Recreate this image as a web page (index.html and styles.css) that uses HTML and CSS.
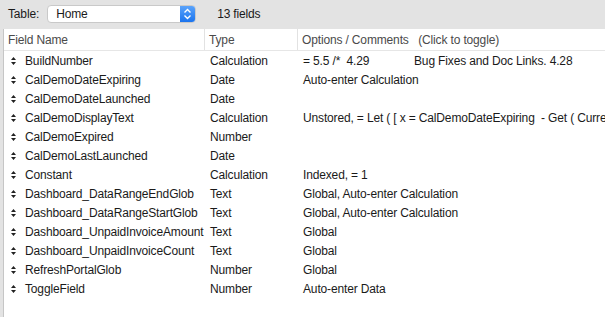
FILE: index.html
```html
<!DOCTYPE html>
<html lang="en">
<head>
  <meta charset="UTF-8">
  <title>Fields</title>
  <link rel="stylesheet" href="styles.css">
</head>
<body>
  <div class="toolbar">
    <span class="tlabel">Table:</span>
    <div class="popup">
      <span class="popup-text">Home</span>
      <span class="stepper">
        <svg width="9" height="12" viewBox="0 0 9 12"><path d="M1.5 4.5 L4.5 1.5 L7.5 4.5 M1.5 7.5 L4.5 10.5 L7.5 7.5" fill="none" stroke="#fff" stroke-width="1.4"/></svg>
      </span>
    </div>
    <span class="count">13 fields</span>
  </div>

  <div class="table">
    <div class="head">
      <div class="hcell">Field Name</div>
      <div class="hcell">Type</div>
      <div class="hcell">Options / Comments &nbsp; (Click to toggle)</div>
    </div>
    <div class="rows" id="rows"></div>
  </div>

  <script>
    const fields = [
      ['BuildNumber', 'Calculation', '= 5.5 /*  4.29', 'Bug Fixes and Doc Links. 4.28'],
      ['CalDemoDateExpiring', 'Date', 'Auto-enter Calculation'],
      ['CalDemoDateLaunched', 'Date', ''],
      ['CalDemoDisplayText', 'Calculation', 'Unstored, = Let ( [ x = CalDemoDateExpiring  - Get ( CurrentDate ) ; y = x ]'],
      ['CalDemoExpired', 'Number', ''],
      ['CalDemoLastLaunched', 'Date', ''],
      ['Constant', 'Calculation', 'Indexed, = 1'],
      ['Dashboard_DataRangeEndGlob', 'Text', 'Global, Auto-enter Calculation'],
      ['Dashboard_DataRangeStartGlob', 'Text', 'Global, Auto-enter Calculation'],
      ['Dashboard_UnpaidInvoiceAmount', 'Text', 'Global'],
      ['Dashboard_UnpaidInvoiceCount', 'Text', 'Global'],
      ['RefreshPortalGlob', 'Number', 'Global'],
      ['ToggleField', 'Number', 'Auto-enter Data']
    ];
    const handle = '<svg class="grip" width="5" height="8" viewBox="0 0 5 8"><path d="M2.5 0 L5 3 L0 3 Z M0 5 L5 5 L2.5 8 Z" fill="#222"/></svg>';
    const rows = document.getElementById('rows');
    fields.forEach(function(f){
      const row = document.createElement('div');
      row.className = 'row';
      let opts = '<span>' + f[2] + '</span>';
      if(f[3]) opts = '<span class="opt1">' + f[2] + '</span><span>' + f[3] + '</span>';
      row.innerHTML = '<div class="cell name">' + handle + '<span>' + f[0] + '</span></div>' +
        '<div class="cell">' + f[1] + '</div>' +
        '<div class="cell opts">' + opts + '</div>';
      rows.appendChild(row);
    });
  </script>
</body>
</html>
```

FILE: styles.css
```css
*{box-sizing:border-box;margin:0;padding:0;}
body{
  width:605px;
  height:317px;
  overflow:hidden;
  background:#e3e3e3;
  font-family:"Liberation Sans",Arial,sans-serif;
  font-size:12px;
  letter-spacing:-0.15px;
  color:#1a1a1a;
}
.toolbar{
  height:28px;
  display:flex;
  align-items:center;
  padding-left:8px;
}
.tlabel{margin-right:8px;}
.popup{
  width:149px;
  height:18px;
  display:flex;
  align-items:center;
  background:#fff;
  border:1px solid #c9c9c9;
  border-radius:4px;
  overflow:hidden;
}
.popup-text{flex:1;padding-left:8px;}
.stepper{
  width:15px;
  height:100%;
  display:flex;
  align-items:center;
  justify-content:center;
  background:linear-gradient(#5aa3fb,#1b74ee);
}
.count{margin-left:21px;}
.table{
  margin-left:3px;
  height:289px;
  background:#fff;
  border-left:1px solid #c6c6c6;
  margin-top:1px;
}
.head{
  display:grid;
  grid-template-columns:201px 93px 1fr;
  height:22px;
  border-bottom:1px solid #e6e6e6;
  color:#4a4a4a;
}
.hcell{
  display:flex;
  align-items:center;
  padding-left:4px;
  border-right:1px solid #e2e2e2;
  white-space:nowrap;
}
.hcell:last-child{border-right:none;}
.row{
  display:grid;
  grid-template-columns:201px 93px 1fr;
  height:19px;
  align-items:center;
  white-space:nowrap;
}
.cell{padding-left:5px;overflow:hidden;}
.name{display:flex;align-items:center;padding-left:7px;}
.grip{flex-shrink:0;margin-right:9px;}
.opts{white-space:pre;}
.opt1{display:inline-block;width:111px;}
```
